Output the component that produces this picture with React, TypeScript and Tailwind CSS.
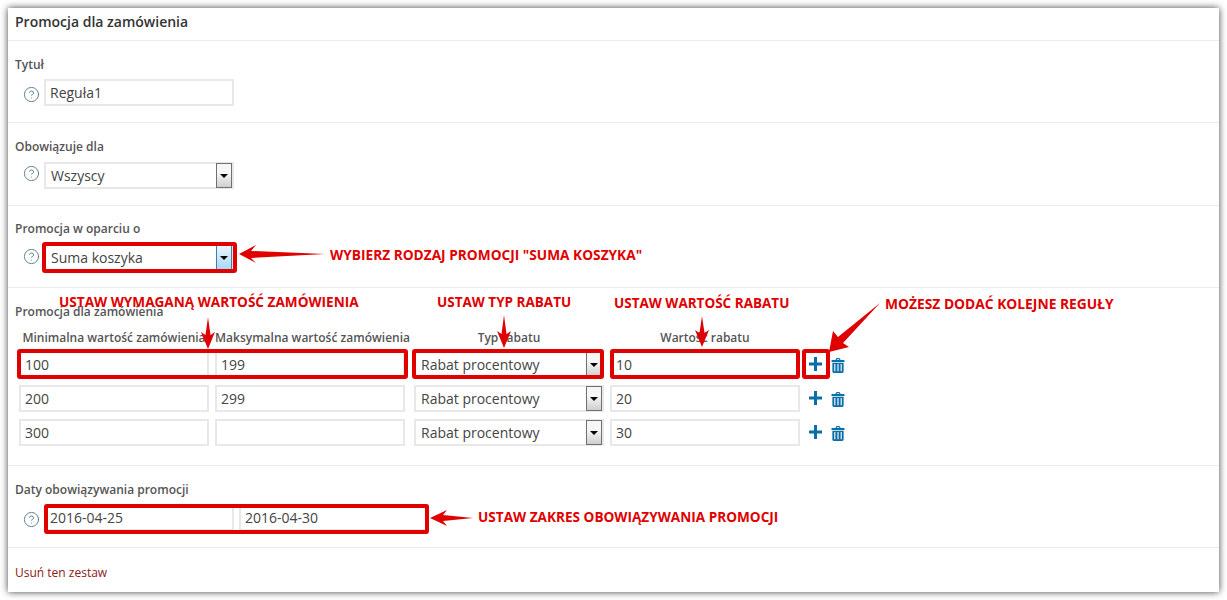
import { CircleHelp } from "lucide-react";

const RED = "#e00000";

function Help({ shift }: { shift: string }) {
  return (
    <span className={`flex w-[29px] shrink-0 justify-end pr-[4px] ${shift}`}>
      <CircleHelp size={17} strokeWidth={1.25} className="text-[#4f7183]" />
    </span>
  );
}

function Field({ value, className = "" }: { value: string; className?: string }) {
  return (
    <div className={`flex h-[27px] items-center border-2 border-[#e8e8e8] bg-white px-[4px] text-[14px] text-[#444] ${className}`}>
      {value}
    </div>
  );
}

function Select({ value, width, focused = false }: { value: string; width: string; focused?: boolean }) {
  return (
    <div className={`flex h-[27px] items-center justify-between border-2 border-[#e8e8e8] bg-white pl-[5px] text-[14px] text-[#444] ${width}`}>
      <span>{value}</span>
      <span
        className={`flex h-[25px] w-[16px] items-center justify-center border ${
          focused
            ? "border-[#3c7fb1] bg-gradient-to-b from-[#eaf6fd] to-[#a7d9f5]"
            : "border-[#707070] bg-gradient-to-b from-[#f6f6f6] from-40% to-[#cfcfcf]"
        }`}
      >
        <span className="h-0 w-0 border-x-[4.5px] border-t-[4.5px] border-x-transparent border-t-black" />
      </span>
    </div>
  );
}

function PlusIcon() {
  return (
    <svg width="13" height="14" viewBox="0 0 13 14" className="-translate-y-[1px] text-[#0a6ea8]">
      <path d="M5 0h3v5.500h5v3H8V14H5V8.500H0v-3h5z" fill="currentColor" />
    </svg>
  );
}

function TrashIcon() {
  return (
    <svg width="14" height="15" viewBox="0 0 14 16" className="translate-y-[1px] text-[#0a6ea8]">
      <path
        fill="currentColor"
        fillRule="evenodd"
        d="M4.200 2.200 5 .6C5.200.2 5.500 0 6 0h2c.5 0 .8.2 1 .6l.8 1.600H13c.6 0 1 .4 1 1v1H0v-1c0-.6.4-1 1-1zM5.500 2.200h3L8 1.200H6zM1 5h12v9.500c0 .9-.6 1.500-1.500 1.500h-9C1.600 16 1 15.400 1 14.500zM3 6.500v7.500h1.200V6.500zM6.400 6.500v7.500h1.200V6.500zM9.800 6.500v7.500H11V6.500z"
      />
    </svg>
  );
}

function Section({
  label,
  children,
  pt = "pt-[15px]",
  mb = "mb-[5px]",
}: {
  label: string;
  children: React.ReactNode;
  pt?: string;
  mb?: string;
}) {
  return (
    <section className={`border-b border-[#ececec] px-[7px] pb-[16px] ${pt}`}>
      <div className={`h-[18px] text-[12px] font-semibold leading-[18px] text-[#555] ${mb}`}>{label}</div>
      {children}
    </section>
  );
}

const rows = [
  { min: "100", max: "199", value: "10" },
  { min: "200", max: "299", value: "20" },
  { min: "300", max: "", value: "30" },
];

const notes = [
  { text: 'WYBIERZ RODZAJ PROMOCJI "SUMA KOSZYKA"', x: 330, y: 246, size: "text-[13.7px]" },
  { text: "USTAW WYMAGANĄ WARTOŚĆ ZAMÓWIENIA", x: 59, y: 293, size: "text-[13.6px]" },
  { text: "USTAW TYP RABATU", x: 437, y: 293, size: "text-[13.5px]" },
  { text: "USTAW WARTOŚĆ RABATU", x: 614, y: 294, size: "text-[13.5px]" },
  { text: "MOŻESZ DODAĆ KOLEJNE REGUŁY", x: 885, y: 295, size: "text-[13.8px]" },
  { text: "USTAW ZAKRES OBOWIĄZYWANIA PROMOCJI", x: 478, y: 508, size: "text-[13.6px]" },
];

const boxes = [
  [44, 244, 191, 27],
  [19, 351, 387, 26],
  [414, 351, 188, 26],
  [612, 351, 186, 26],
  [804, 351, 24, 26],
  [46, 506, 381, 26],
];

export default function App() {
  return (
    <div className="relative h-[600px] w-[1227px] overflow-hidden bg-white p-[8px] font-['Open_Sans',sans-serif]">
      <div className="h-[584px] bg-white shadow-[0_0_7px_rgba(0,0,0,0.75)]">
        <header className="flex h-[33px] items-center border-b border-[#ececec] px-[7px] pb-[6px] text-[14px] font-semibold text-[#333]">
          Promocja dla zamówienia
        </header>

        <Section label="Tytuł">
          <div className="flex items-center">
            <Help shift="translate-y-[2px]" />
            <Field value="Reguła1" className="w-[190px]" />
          </div>
        </Section>

        <Section label="Obowiązuje dla" mb="mb-[6px]">
          <div className="flex items-center">
            <Help shift="-translate-y-[2px]" />
            <Select value="Wszyscy" width="w-[190px]" />
          </div>
        </Section>

        <Section label="Promocja w oparciu o" pt="pt-[14px]" mb="mb-[6px]">
          <div className="flex items-center">
            <Help shift="-translate-y-[1px]" />
            <Select value="Suma koszyka" width="w-[190px]" focused />
          </div>
        </Section>

        <section className="h-[178px] border-b border-[#ececec] px-[7px] pt-[15px]">
          <div className="h-[18px] text-[12px] font-semibold leading-[18px] text-[#555]">Promocja dla zamówienia</div>
          <div className="mt-[9px] flex pl-[4px] text-center text-[12px] font-semibold leading-[16px] text-[#555]">
            <div className="w-[190px] whitespace-nowrap">Minimalna wartość zamówienia</div>
            <div className="ml-[6px] w-[190px] whitespace-nowrap">Maksymalna wartość zamówienia</div>
            <div className="ml-[9px] w-[190px]">Typ rabatu</div>
            <div className="ml-[6px] w-[190px]">Wartość rabatu</div>
          </div>
          <div className="mt-[5px] flex flex-col gap-[7px] pl-[4px]">
            {rows.map((r) => (
              <div key={r.min} className="flex items-center">
                <Field value={r.min} className="w-[190px]" />
                <Field value={r.max} className="ml-[6px] w-[190px]" />
                <div className="ml-[9px]">
                  <Select value="Rabat procentowy" width="w-[190px]" />
                </div>
                <Field value={r.value} className="ml-[6px] w-[190px]" />
                <div className="ml-[9px] flex items-center gap-[9px]">
                  <PlusIcon />
                  <TrashIcon />
                </div>
              </div>
            ))}
          </div>
        </section>

        <Section label="Daty obowiązywania promocji">
          <div className="flex items-center">
            <Help shift="translate-y-[2px]" />
            <Field value="2016-04-25" className="w-[190px]" />
            <Field value="2016-04-30" className="ml-[5px] w-[190px]" />
          </div>
        </Section>

        <div className="flex h-[44px] items-center px-[7px] pt-[5px] text-[12px] text-[#8b1a1a]">
          Usuń ten zestaw
        </div>
      </div>

      {/* screenshot annotations */}
      <svg width="1227" height="600" className="pointer-events-none absolute left-0 top-0">
        {boxes.map(([x, y, w, h]) => (
          <rect key={`${x}-${y}`} x={x} y={y} width={w} height={h} fill="none" stroke={RED} strokeWidth="4" rx="1" />
        ))}
        <g fill={RED}>
          <polygon points="239,254 256,245 251,251 325,254 251,258 256,263" />
          <polygon points="430,518 447,510 443,515 473,518 443,521 447,526" />
          <polygon points="208,349 201,332 205.500,335 208,317 210.500,335 215,332" />
          <polygon points="504,348 497,331 501.500,334 504,315 506.500,334 511,331" />
          <polygon points="702,347 695,330 699.500,333 702,316 704.500,333 709,330" />
          <polygon points="829,352 833,331 838,337 880,303 843,343 849,347" />
        </g>
      </svg>
      {notes.map((n) => (
        <span
          key={n.text}
          className={`absolute whitespace-nowrap font-bold leading-[18px] text-[#e00000] ${n.size}`}
          style={{ left: n.x, top: n.y }}
        >
          {n.text}
        </span>
      ))}
    </div>
  );
}
